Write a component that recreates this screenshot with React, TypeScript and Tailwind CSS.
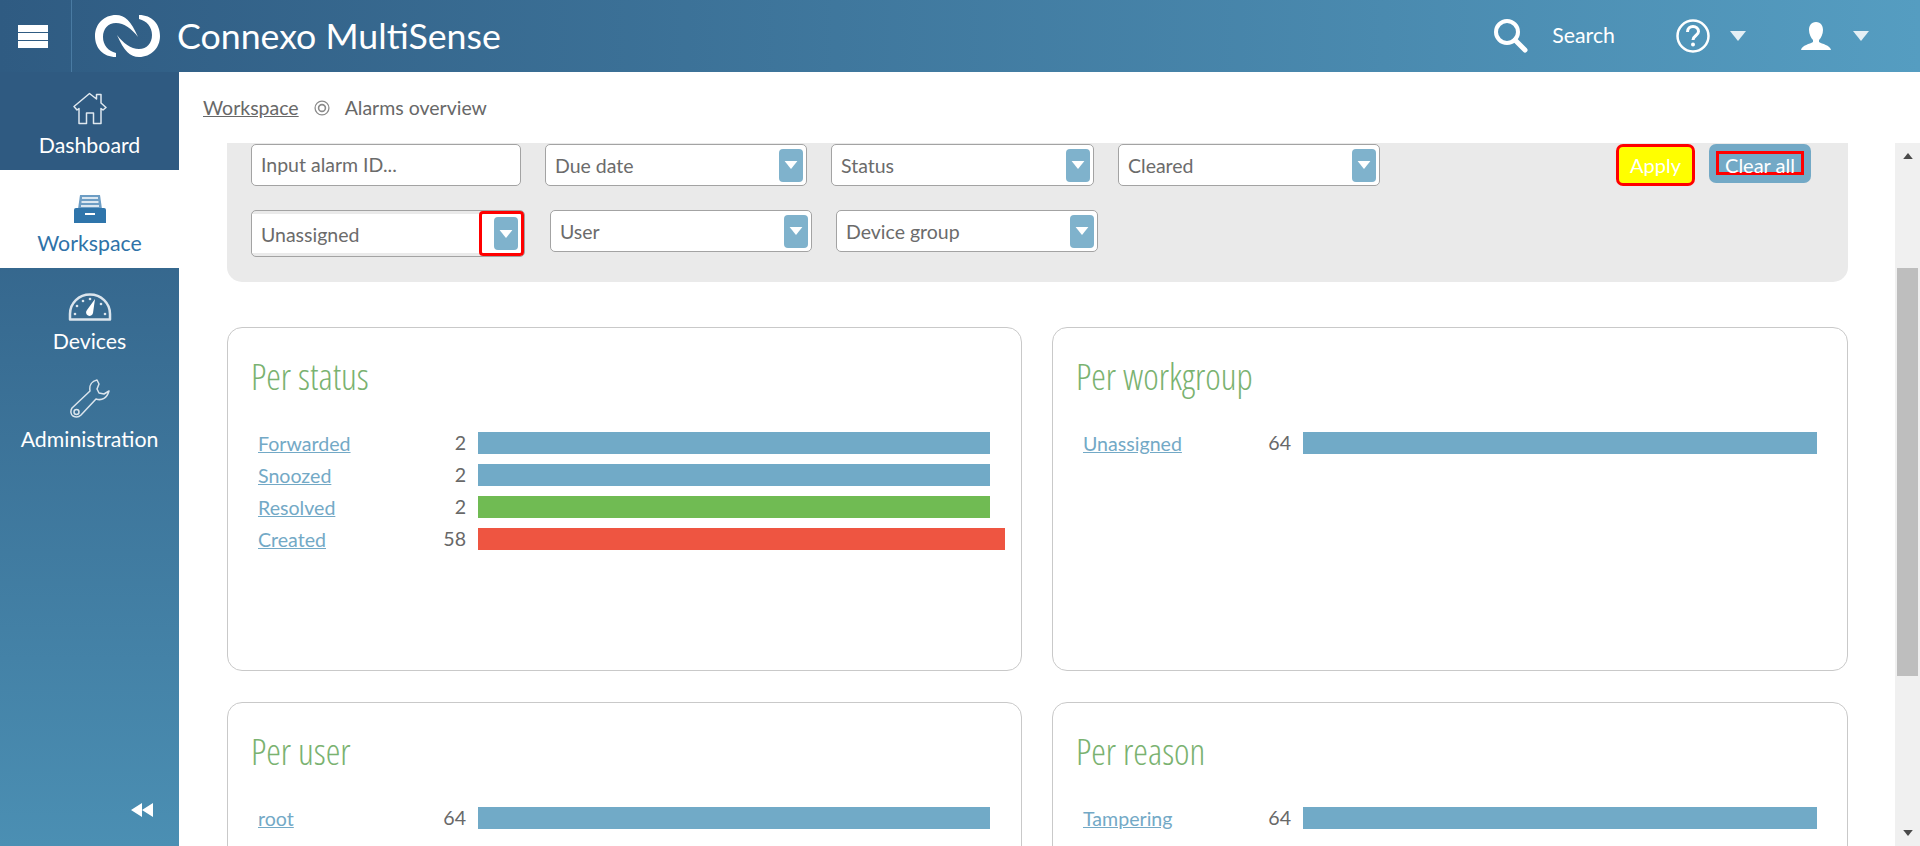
import type { ReactNode } from "react";

type Row = { label: string; count: number; width: string; color: string };

const statusRows: Row[] = [
  { label: "Forwarded", count: 2, width: "w-[512px]", color: "bg-[#71aac7]" },
  { label: "Snoozed", count: 2, width: "w-[512px]", color: "bg-[#71aac7]" },
  { label: "Resolved", count: 2, width: "w-[512px]", color: "bg-[#70bb53]" },
  { label: "Created", count: 58, width: "w-[527px]", color: "bg-[#ee5541]" },
];

function Caret({ className }: { className: string }) {
  return (
    <svg viewBox="0 0 16 10" className={className} fill="currentColor">
      <path d="M0 0h16L8 10z" />
    </svg>
  );
}

function HomeIcon() {
  return (
    <svg width="34" height="33" viewBox="0 0 34 33" fill="none" stroke="#dfe8ef" strokeWidth="1.5" strokeLinejoin="round">
      <path d="M1 14.500 16.500 1.500 23.500 7V2.500H28V11L33 15.500 30 18 28 16.500V31.500H20.500V21H13.500V31.500H6V16.500L4 18Z" />
    </svg>
  );
}

function DrawerIcon() {
  return (
    <svg width="32" height="28" viewBox="0 0 32 28">
      <path d="M6 0h20l2 14H4z" fill="#6d9dc4" />
      <path d="M8 3h16M7.500 7h17M7 11h18" stroke="#fff" strokeWidth="1.500" />
      <path d="M0 15q0-2 2-2h28q2 0 2 2v13H0z" fill="#2f75ab" />
      <rect x="11" y="18" width="10" height="2" fill="#fff" />
    </svg>
  );
}

function GaugeIcon() {
  return (
    <svg width="44" height="28" viewBox="0 0 44 28" fill="none" stroke="#dbe5ed">
      <path d="M2 26.500V21C2 10 11 1.500 22 1.500S42 10 42 21v5.500z" strokeWidth="2.500" strokeLinejoin="round" />
      <path d="M27 6 25 20a3.500 3.500 0 1 1-6-3z" fill="#fff" stroke="none" />
      <g fill="#dbe5ed" stroke="none">
        <circle cx="7" cy="21" r="1.300" />
        <circle cx="9" cy="13" r="1.300" />
        <circle cx="15" cy="8" r="1.300" />
        <circle cx="22" cy="6" r="1.300" />
        <circle cx="33" cy="11" r="1.300" />
        <circle cx="37" cy="21" r="1.300" />
      </g>
    </svg>
  );
}

function WrenchIcon() {
  return (
    <svg width="40" height="40" viewBox="0 0 40 40" fill="none" stroke="#dbe5ed" strokeWidth="1.500" strokeLinejoin="round">
      <path d="M27 1c-5 1-8 5-7 11L2 29c-2 3-1 7 1 8s5 2 8-1l15-16c6 2 11-1 13-8l-5 3-5-1-2-4 2-5z" />
      <circle cx="6.500" cy="33" r="2.500" />
    </svg>
  );
}

function Logo() {
  const hook =
    "M22 42C9 42 1 33 1 21 1 9 10 0 22 0c9 0 15 6 22 22-6-8-14-14-22-14C14 8 9 14 9 22c0 8 5 14 13 16z";
  return (
    <svg width="67" height="42" viewBox="0 0 67 42" fill="#fff">
      <path d={hook} />
      <path d={hook} transform="rotate(180 33.500 21)" />
    </svg>
  );
}

function NavItem({ label, icon, active, dark }: { label: string; icon: ReactNode; active?: boolean; dark?: boolean }) {
  return (
    <div
      className={`flex h-[98px] flex-col items-center text-[21.3px] leading-6 ${
        active ? "bg-white text-[#2f72a8]" : "text-white"
      } ${dark ? "bg-[#2f5a81]" : ""}`}
    >
      <div className="flex h-[61px] items-end justify-center pb-[8px]">{icon}</div>
      <span>{label}</span>
    </div>
  );
}

function Header() {
  return (
    <header className="flex h-[72px] shrink-0 items-center bg-gradient-to-r from-[#2f5b82] to-[#559dc1] text-white">
      <div className="flex h-full w-[72px] items-center border-r border-[#4a7ba3] pl-[18px]">
        <div className="flex w-[30px] flex-col gap-px">
          <span className="h-[7px] bg-white" />
          <span className="h-[7px] bg-white" />
          <span className="h-[7px] bg-white" />
        </div>
      </div>
      <div className="ml-[22px]">
        <Logo />
      </div>
      <span className="ml-[16px] text-[35.7px] leading-none">Connexo MultiSense</span>
      <div className="ml-auto flex items-center">
        <svg width="36" height="36" viewBox="0 0 36 36" fill="none" stroke="#fff" strokeLinecap="round">
          <circle cx="14" cy="14" r="11" strokeWidth="4" />
          <path d="M22 22 32 32" strokeWidth="5" />
        </svg>
        <span className="ml-[23px] text-[21.3px]">Search</span>
        <svg className="ml-[61px]" width="34" height="34" viewBox="0 0 34 34" fill="none" stroke="#fff">
          <circle cx="17" cy="17" r="15.500" strokeWidth="2.500" />
          <path d="M11.500 13c0-3.500 2.500-5.500 5.500-5.500s5.500 2 5.500 5c0 4-5.500 4-5.500 8.500" strokeWidth="3" />
          <circle cx="17" cy="25.500" r="2" fill="#fff" stroke="none" />
        </svg>
        <Caret className="ml-[20px] h-[10px] w-[16px] text-[#e4eff5]" />
        <svg className="ml-[55px]" width="30" height="28" viewBox="0 0 30 28" fill="#fff">
          <path d="M15 0c5 0 7 4 7 8 0 4-2 8-4 10v2c3 2 11 3 12 8H0c1-5 9-6 12-8v-2c-2-2-4-6-4-10 0-4 2-8 7-8z" />
        </svg>
        <Caret className="mr-[51px] ml-[22px] h-[10px] w-[16px] text-[#e4eff5]" />
      </div>
    </header>
  );
}

function Sidebar() {
  return (
    <aside className="relative w-[179px] shrink-0 bg-gradient-to-b from-[#2f5b82] to-[#4b8fb3]">
      <NavItem label="Dashboard" icon={<HomeIcon />} dark />
      <NavItem label="Workspace" icon={<DrawerIcon />} active />
      <NavItem label="Devices" icon={<GaugeIcon />} />
      <NavItem label="Administration" icon={<WrenchIcon />} />
      <svg className="absolute right-[26px] bottom-[29px]" width="22" height="14" viewBox="0 0 22 14" fill="#fff">
        <path d="M0 7 11 0v14zM11 7 22 0v14z" />
      </svg>
    </aside>
  );
}

function SelectBox({ label, width }: { label: string; width: string }) {
  return (
    <div className={`flex h-[42px] items-center justify-between rounded-[5px] border border-[#a3a3a3] bg-white pr-[3px] pl-[9px] ${width}`}>
      <span className="pt-[2px]">{label}</span>
      <span className="flex h-[33px] w-[24px] items-center justify-center rounded-[4px] bg-[#7fb2cc]">
        <Caret className="h-[8px] w-[14px] text-white" />
      </span>
    </div>
  );
}

function Filters() {
  return (
    <section className="rounded-b-[15px] bg-[#eaeaea] pt-px pr-[37px] pb-[25px] pl-[24px] text-[19.5px] text-[#6b6b6b]">
      <div className="flex items-start">
        <div className="flex h-[42px] w-[270px] items-center rounded-[5px] border border-[#a3a3a3] bg-white pl-[9px]">
          Input alarm ID...
        </div>
        <div className="ml-[24px] flex gap-[24px]">
          <SelectBox label="Due date" width="w-[262px]" />
          <SelectBox label="Status" width="w-[263px]" />
          <SelectBox label="Cleared" width="w-[262px]" />
        </div>
        <button className="ml-auto h-[42px] w-[79px] rounded-[7px] border-[3px] border-[#ff0000] bg-[#ffff00] text-[20px] text-white">
          Apply
        </button>
        <button className="ml-[14px] flex h-[39px] w-[102px] items-start justify-center rounded-[7px] bg-[#73a9c6] pt-[7px]">
          <span className="flex h-[24px] w-[88px] justify-center border-[3px] border-[#ff0000] text-[20px] leading-[22px] text-white">
            Clear all
          </span>
        </button>
      </div>
      <div className="mt-[24px] flex items-start">
        <div className="flex h-[47px] w-[274px] items-center justify-between rounded-[5px] border border-[#a3a3a3] bg-[#eaeaea]">
          <span className="flex h-[39px] flex-1 items-center bg-white pt-[2px] pl-[9px]">Unassigned</span>
          <span className="flex h-[45px] w-[45px] items-center justify-end rounded-[4px] border-[3px] border-[#ff0000] bg-white pr-[3px]">
            <span className="flex h-[33px] w-[24px] items-center justify-center rounded-[4px] bg-[#7fb2cc]">
              <Caret className="h-[8px] w-[14px] text-white" />
            </span>
          </span>
        </div>
        <div className="ml-[25px] flex gap-[24px]">
          <SelectBox label="User" width="w-[262px]" />
          <SelectBox label="Device group" width="w-[262px]" />
        </div>
      </div>
    </section>
  );
}

function Card({ title, rows }: { title: string; rows: Row[] }) {
  return (
    <div className="h-[344px] rounded-[15px] border border-[#c9c9c9] pl-[23px]">
      <h2 className="mt-[24px] h-[48px] font-['Open_Sans'] text-[37px] leading-[48px] font-light text-[#7ab270] [font-stretch:75%]">
        {title}
      </h2>
      <div className="mt-[32px] flex flex-col gap-[10px] pl-[7px] text-[19.6px]">
        {rows.map((row) => (
          <div key={row.label} className="flex h-[22px] items-center">
            <a className="w-[167px] pt-[2px] text-[#73a9c6] underline">{row.label}</a>
            <span className="mr-[12px] w-[41px] text-right text-[#686868]">{row.count}</span>
            <span className={`h-[22px] shrink-0 ${row.width} ${row.color}`} />
          </div>
        ))}
      </div>
    </div>
  );
}

function Scrollbar() {
  return (
    <div className="flex w-[25px] shrink-0 flex-col items-center bg-[#f0f0f0]">
      <Caret className="mt-[10px] h-[6px] w-[12px] rotate-180 text-[#4a4a4a]" />
      <div className="mt-[109px] h-[408px] w-[21px] bg-[#bebebe]" />
      <Caret className="mt-auto mb-[10px] h-[6px] w-[12px] text-[#4a4a4a]" />
    </div>
  );
}

export default function App() {
  return (
    <div className="flex h-screen flex-col overflow-hidden bg-white font-['Lato'] text-[19.5px]">
      <Header />
      <div className="flex min-h-0 flex-1">
        <Sidebar />
        <main className="flex min-w-0 flex-1 flex-col">
          <div className="flex h-[71px] shrink-0 items-center pl-[24px] text-[#686868]">
            <a className="underline">Workspace</a>
            <svg className="mx-[15px]" width="16" height="16" viewBox="0 0 15 15" fill="none" stroke="#8a8a8a">
              <circle cx="7.500" cy="7.500" r="6.500" strokeWidth="1.200" />
              <circle cx="7.500" cy="7.500" r="3.200" strokeWidth="1.500" />
            </svg>
            <span>Alarms overview</span>
          </div>
          <div className="flex min-h-0 flex-1">
            <div className="min-w-0 flex-1 overflow-hidden pr-[47px] pl-[48px]">
              <Filters />
              <div className="mt-[45px] grid grid-cols-[795px_1fr] gap-x-[30px] gap-y-[31px]">
                <Card title="Per status" rows={statusRows} />
                <Card
                  title="Per workgroup"
                  rows={[{ label: "Unassigned", count: 64, width: "w-[514px]", color: "bg-[#71aac7]" }]}
                />
                <Card title="Per user" rows={[{ label: "root", count: 64, width: "w-[512px]", color: "bg-[#71aac7]" }]} />
                <Card
                  title="Per reason"
                  rows={[{ label: "Tampering", count: 64, width: "w-[514px]", color: "bg-[#71aac7]" }]}
                />
              </div>
            </div>
            <Scrollbar />
          </div>
        </main>
      </div>
    </div>
  );
}
